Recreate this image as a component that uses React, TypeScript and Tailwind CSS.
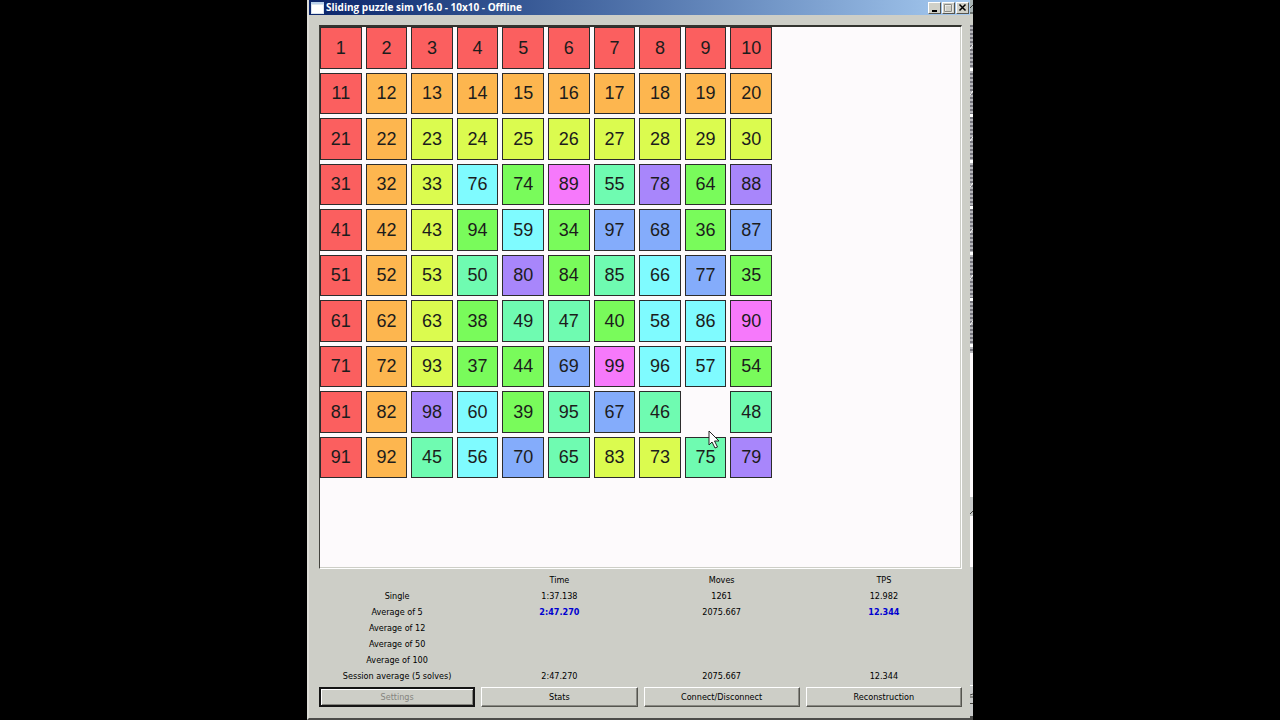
import clsx from "clsx";

const TILE_COLORS: Record<string, string> = {
  r: "bg-[#fb5f5f]",
  o: "bg-[#fdb64f]",
  y: "bg-[#dbfb4f]",
  g: "bg-[#79fb5b]",
  t: "bg-[#6ffbb1]",
  c: "bg-[#7ffbff]",
  b: "bg-[#84acfb]",
  v: "bg-[#a886fb]",
  m: "bg-[#f679fb]",
};

// number followed by the color key, "-" is the gap
const BOARD = [
  "1r 2r 3r 4r 5r 6r 7r 8r 9r 10r",
  "11r 12o 13o 14o 15o 16o 17o 18o 19o 20o",
  "21r 22o 23y 24y 25y 26y 27y 28y 29y 30y",
  "31r 32o 33y 76c 74g 89m 55t 78v 64g 88v",
  "41r 42o 43y 94g 59c 34g 97b 68b 36g 87b",
  "51r 52o 53y 50t 80v 84g 85t 66c 77b 35g",
  "61r 62o 63y 38g 49t 47t 40g 58c 86c 90m",
  "71r 72o 93y 37g 44g 69b 99m 96c 57c 54g",
  "81r 82o 98v 60c 39g 95t 67b 46t - 48t",
  "91r 92o 45t 56c 70b 65t 83y 73y 75t 79v",
].map((row) => row.split(" "));

interface StatRow {
  label: string;
  time?: string;
  moves?: string;
  tps?: string;
  best?: boolean;
}

const STATS: StatRow[] = [
  { label: "Single", time: "1:37.138", moves: "1261", tps: "12.982" },
  {
    label: "Average of 5",
    time: "2:47.270",
    moves: "2075.667",
    tps: "12.344",
    best: true,
  },
  { label: "Average of 12" },
  { label: "Average of 50" },
  { label: "Average of 100" },
  {
    label: "Session average (5 solves)",
    time: "2:47.270",
    moves: "2075.667",
    tps: "12.344",
  },
];

function CaptionButton({
  label,
  children,
}: {
  label: string;
  children: React.ReactNode;
}) {
  return (
    <button
      type="button"
      aria-label={label}
      className="w-[13px] h-[12px] bg-[#d0d0c8] border border-t-white border-l-white border-r-[#55554f] border-b-[#55554f] flex items-center justify-center"
    >
      <svg width="11" height="10" viewBox="0 0 11 10" fill="none">
        {children}
      </svg>
    </button>
  );
}

function TitleBar() {
  return (
    <header className="h-[15px] pl-[2px] pr-px flex items-center bg-linear-to-r from-[#0a246a] to-[#a6caf0]">
      <svg width="13" height="12" viewBox="0 0 13 12" className="shrink-0">
        <rect width="13" height="12" fill="#d9e4ee" />
        <rect x="1" y="3" width="11" height="8" fill="#fff" />
        <rect width="13" height="2" fill="#b8d0ea" />
      </svg>
      <h1 className="flex-1 pl-[2px] text-[10px] leading-[15px] font-bold text-white whitespace-nowrap font-['Open_Sans',sans-serif]">
        Sliding puzzle sim v16.0 - 10x10 - Offline
      </h1>
      <div className="flex gap-px">
        <CaptionButton label="Minimize">
          <path d="M3 8h5" stroke="#000" strokeWidth="2" />
        </CaptionButton>
        <CaptionButton label="Maximize">
          <path d="M2 2h7v7H2z" stroke="#fff" />
          <path d="M1.500 1.500h7v7h-7z" stroke="#8c8c86" />
        </CaptionButton>
        <CaptionButton label="Close">
          <path d="M2.500 1.500l6 6M8.500 1.500l-6 6" stroke="#000" strokeWidth="1.500" />
        </CaptionButton>
      </div>
    </header>
  );
}

function Tile({ value }: { value: string }) {
  if (value === "-") {
    return (
      <div className="relative">
        <svg
          width="12"
          height="20"
          viewBox="0 0 12 20"
          className="absolute left-[23px] top-[39px] z-10"
        >
          <path
            d="M1 1v14l3-3 3 6 2.500-1-3-6H11z"
            fill="#fff"
            stroke="#222"
            strokeWidth="1"
          />
        </svg>
      </div>
    );
  }

  return (
    <div
      className={clsx(
        "border border-[#2c2c2c] flex items-center justify-center",
        TILE_COLORS[value.slice(-1)],
      )}
    >
      {value.slice(0, -1)}
    </div>
  );
}

function StatsTable() {
  return (
    <table className="w-[calc(100%+12px)] -mx-[6px] table-fixed border-separate border-spacing-x-[6px] border-spacing-y-0 text-center text-[9px] leading-[16px]">
      <thead>
        <tr>
          <td className="p-0" />
          <th className="p-0 font-normal">Time</th>
          <th className="p-0 font-normal">Moves</th>
          <th className="p-0 font-normal">TPS</th>
        </tr>
      </thead>
      <tbody>
        {STATS.map((row) => (
          <tr key={row.label} className="h-[16px]">
            <th className="p-0 font-normal whitespace-nowrap">{row.label}</th>
            <td className={clsx("p-0", row.best && "font-bold text-[#0000d0]")}>
              {row.time}
            </td>
            <td className="p-0">{row.moves}</td>
            <td className={clsx("p-0", row.best && "font-bold text-[#0000d0]")}>
              {row.tps}
            </td>
          </tr>
        ))}
      </tbody>
    </table>
  );
}

function ActionButton({
  label,
  disabled,
}: {
  label: string;
  disabled?: boolean;
}) {
  return (
    <button
      type="button"
      disabled={disabled}
      className={clsx(
        "h-[20px] text-[9px] leading-[16px]",
        disabled
          ? "border-2 border-[#151515] text-[#85857f] shadow-[inset_1px_1px_0_#fff,inset_-1px_-1px_0_#85857f]"
          : "border border-t-white border-l-white border-r-[#55554f] border-b-[#55554f] shadow-[inset_-1px_-1px_0_#8a8a84]",
      )}
    >
      {label}
    </button>
  );
}

// edge of the window lying underneath
function BackgroundWindow() {
  return (
    <div className="w-[3px] shrink-0 flex flex-col bg-[#c8caca]" aria-hidden="true">
      <svg width="3" height="25">
        <rect width="3" height="14" fill="#a9b4b4" />
        <path d="M0 8l3-3M0 13h3" stroke="#33332f" />
        <rect y="14" width="3" height="11" fill="#cdcec7" />
      </svg>
      <svg width="3" height="328">
        <defs>
          <pattern id="rows" width="3" height="4" patternUnits="userSpaceOnUse">
            <rect width="3" height="4" fill="#b8b8bc" />
            <rect width="3" height="2" fill="#77777f" />
          </pattern>
          <pattern id="marks" width="3" height="46" patternUnits="userSpaceOnUse">
            <path d="M0 24l3-4" stroke="#fff" />
            <rect y="43" width="3" height="3" fill="#fff" />
          </pattern>
        </defs>
        <rect width="3" height="328" fill="url(#rows)" />
        <rect width="3" height="328" fill="url(#marks)" />
      </svg>
      <div className="h-[144px] bg-[#fdfafc]" />
      <svg width="3" height="19">
        <path d="M0 17l3-3" stroke="#44443f" />
      </svg>
      <div className="h-[51px] bg-[#fdfafc]" />
      <div className="flex-1" />
      <svg width="3" height="35">
        <rect width="3" height="1" fill="#fff" />
        <path d="M0 10l3-1M0 12h3M0 18.500h3" stroke="#44443f" />
        <rect y="31" width="3" height="4" fill="#4c4c4a" />
      </svg>
    </div>
  );
}

export default function App() {
  return (
    <div className="min-h-screen bg-black flex justify-center text-black font-['DejaVu_Sans_Condensed','DejaVu_Sans',sans-serif]">
      <div className="w-full max-w-[666px] flex">
        <main className="flex-1 min-w-0 flex flex-col bg-[#cdcec7] border-l-2 border-l-[#dcdcd6] border-b-2 border-b-[#4c4c4a]">
          <TitleBar />
          <div className="flex-1 flex flex-col pt-[10px] pl-[10px] pr-[8px] pb-[11px]">
            <div className="flex-1 bg-[#fdfafc] border border-t-2 border-t-[#33332f] border-l-[#44443f] border-r-white border-b-white shadow-[inset_-1px_-1px_0_#cdcec7]">
              <div className="w-[452px] h-[451px] grid grid-cols-10 grid-rows-10 gap-[4px] text-[18px] leading-[20px] text-[#1c1c1c] font-['Liberation_Sans',sans-serif]">
                {BOARD.flat().map((value) => (
                  <Tile key={value} value={value} />
                ))}
              </div>
            </div>
            <section aria-label="Statistics" className="pt-[3px]">
              <StatsTable />
            </section>
            <div className="grid grid-cols-4 gap-[6px] pt-[3px]">
              <ActionButton label="Settings" disabled />
              <ActionButton label="Stats" />
              <ActionButton label="Connect/Disconnect" />
              <ActionButton label="Reconstruction" />
            </div>
          </div>
        </main>
        <BackgroundWindow />
      </div>
    </div>
  );
}
